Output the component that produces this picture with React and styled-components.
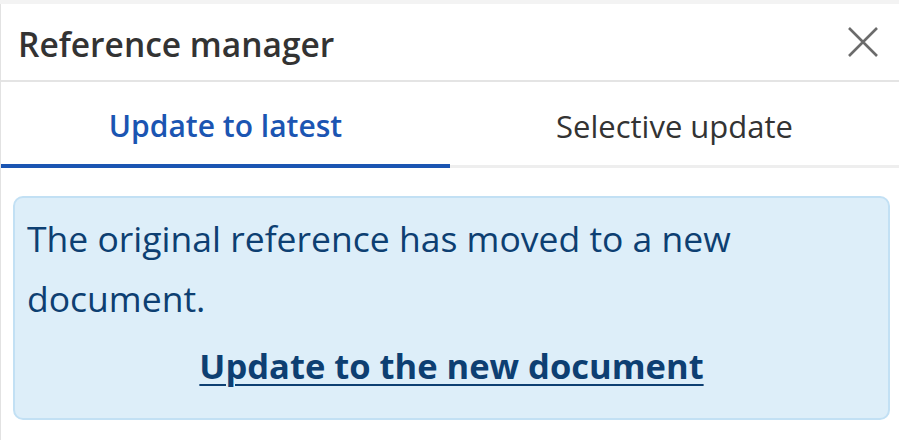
import React, { useState } from 'react';
import styled, { createGlobalStyle } from 'styled-components';

const GlobalStyle = createGlobalStyle`
  html, body {
    margin: 0;
    padding: 0;
    background: #f3f3f3;
  }
  body {
    font-family: "Open Sans", "Liberation Sans", Arial, sans-serif;
    -webkit-font-smoothing: antialiased;
  }
`;

const Panel = styled.div`
  margin-top: 4px;
  height: 436px;
  background: #fff;
  border-left: 1px solid #e2e2e2;
  display: flex;
  flex-direction: column;
`;

const Header = styled.div`
  display: flex;
  align-items: center;
  justify-content: space-between;
  height: 78px;
  padding: 4px 20px 0 17px;
  border-bottom: 2px solid #e4e4e4;
  box-sizing: border-box;
`;

const Title = styled.h1`
  margin: 0;
  font-size: 33.5px;
  font-weight: 600;
  color: #333;
`;

const CloseButton = styled.button`
  border: 0;
  background: none;
  padding: 0;
  margin-top: -4px;
  width: 32px;
  height: 32px;
  display: flex;
  align-items: center;
  justify-content: center;
  color: #6b6b6b;
  cursor: pointer;
`;

const TabBar = styled.div`
  display: flex;
  border-bottom: 3px solid #eeeeee;
`;

const Tab = styled.button`
  flex: 1;
  height: 86px;
  margin-bottom: -3px;
  border: 0;
  border-bottom: 4px solid ${p => (p.$active ? '#1b55b2' : 'transparent')};
  background: none;
  font-family: inherit;
  font-size: ${p => (p.$active ? '30px' : '31px')};
  font-weight: ${p => (p.$active ? 600 : 400)};
  color: ${p => (p.$active ? '#1b55b2' : '#333')};
  padding: 5px 0 0;
  cursor: pointer;
`;

const Body = styled.div`
  padding: 28px 9px 0 12px;
`;

const Notice = styled.div`
  background: #ddeef9;
  border: 2px solid #c2e0f4;
  border-radius: 10px;
  height: 224px;
  box-sizing: border-box;
  padding: 10px 12px 0 12px;
  color: #0d3f72;
`;

const Message = styled.p`
  margin: 0;
  font-size: 35.5px;
  line-height: 60px;
`;

const LinkRow = styled.div`
  text-align: center;
  margin-top: 14px;
  line-height: 48px;
`;

const ActionLink = styled.a`
  font-size: 34.5px;
  font-weight: 700;
  color: #0d3f72;
  text-decoration: underline;
  text-underline-offset: 5px;
  text-decoration-thickness: 2px;
  cursor: pointer;
`;

export default function App() {
  const [tab, setTab] = useState('latest');
  return (
    <>
      <GlobalStyle />
      <Panel>
        <Header>
          <Title>Reference manager</Title>
          <CloseButton aria-label="Close">
            <svg width="30" height="30" viewBox="0 0 30 30">
              <path d="M1 1 L29 29 M29 1 L1 29" stroke="currentColor" strokeWidth="2.6" fill="none" />
            </svg>
          </CloseButton>
        </Header>
        <TabBar>
          <Tab $active={tab === 'latest'} onClick={() => setTab('latest')}>Update to latest</Tab>
          <Tab $active={tab === 'selective'} onClick={() => setTab('selective')}>Selective update</Tab>
        </TabBar>
        <Body>
          <Notice>
            <Message>The original reference has moved to a new document.</Message>
            <LinkRow>
              <ActionLink>Update to the new document</ActionLink>
            </LinkRow>
          </Notice>
        </Body>
      </Panel>
    </>
  );
}
